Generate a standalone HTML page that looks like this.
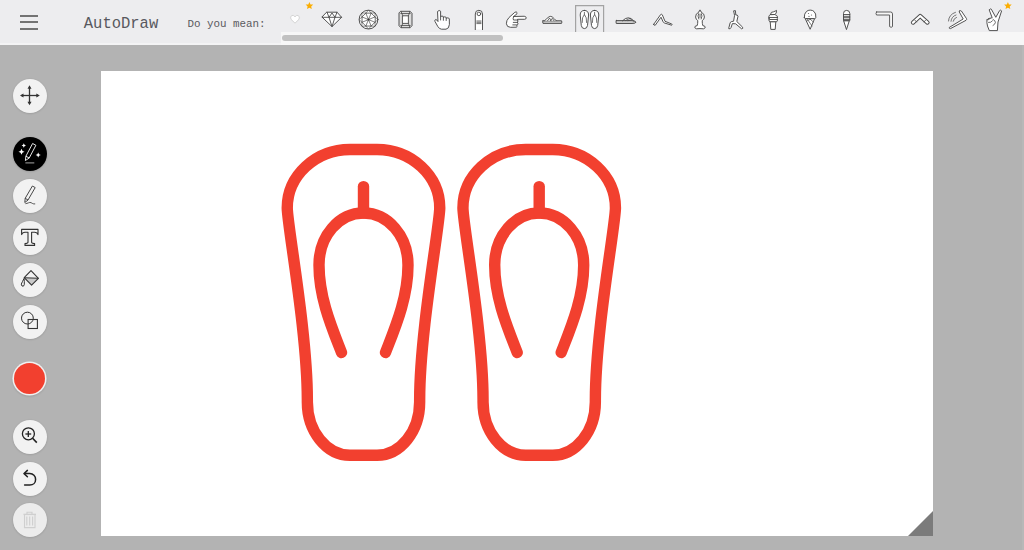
<!DOCTYPE html>
<html><head><meta charset="utf-8">
<style>
html,body{margin:0;padding:0;width:1024px;height:550px;overflow:hidden;background:#b3b3b3;font-family:"Liberation Sans",sans-serif;}
#top{position:absolute;left:0;top:0;width:1024px;height:44px;background:#ededef;}
#topline{position:absolute;left:0;top:43px;width:1024px;height:2px;background:#f4f4f5;}
#track{position:absolute;left:281px;top:32px;width:743px;height:13px;background:#f7f7f7;}
#thumb{position:absolute;left:282px;top:34.5px;width:221px;height:6.5px;border-radius:3.5px;background:#c1c1c1;}
.mono{font-family:"Liberation Mono",monospace;position:absolute;white-space:nowrap;}
#logo{left:83.8px;top:13.9px;font-size:15.5px;color:#58585e;transform:scaleY(1.1);transform-origin:0 0;}
#dym{left:187.4px;top:17.8px;font-size:10.85px;color:#5a5a5e;transform:scaleY(1.0);transform-origin:0 0;}
#canvas{position:absolute;left:101px;top:71px;width:832px;height:465px;background:#fff;}
.btn{position:absolute;left:12.85px;width:34px;height:34px;border-radius:50%;background:#f2f2f2;box-shadow:0 0.5px 2px rgba(0,0,0,0.18);}
.btn svg{position:absolute;left:0;top:0;}
svg{overflow:visible}
</style></head><body>
<div id="top"></div>
<div id="topline"></div>
<div id="track"></div>
<div id="thumb"></div>
<!-- hamburger -->
<div style="position:absolute;left:20px;top:15px;width:18px;height:2.2px;background:#737373"></div>
<div style="position:absolute;left:20px;top:21.3px;width:18px;height:2.2px;background:#737373"></div>
<div style="position:absolute;left:20px;top:27.5px;width:18px;height:2.2px;background:#737373"></div>
<svg style="position:absolute;left:0;top:0" width="1024" height="45">
 <path d="M575.6 32 V5.6 H603.6 V32" fill="none" stroke="#a3a3a3" stroke-width="1.2"/>
 <!-- heart -->
 <path d="M295 16.8 Q293.3 14.6 291.6 15.6 Q290 16.8 291 19.3 L295 23.2 L299 19.3 Q300 16.8 298.4 15.6 Q296.7 14.6 295 16.8Z" fill="#fff" stroke="#d4d4d4" stroke-width="1"/>
 <!-- stars -->
 <path id="star" d="M309.4 1.9 L310.5 4.4 L313.2 4.6 L311.2 6.4 L311.8 9.1 L309.4 7.7 L307 9.1 L307.6 6.4 L305.6 4.6 L308.3 4.4Z" fill="#fbad00"/>
 <use href="#star" transform="translate(698.5,0)"/>
 <g fill="#fff" stroke="#4a4a4a" stroke-width="0.95" stroke-linejoin="round" stroke-linecap="round">
  <!-- diamond -->
  <path d="M327 12.2 L337 12.2 L341.6 17.3 L332 26.6 L322.2 17.3 Z"/>
  <path d="M322.2 17.3 H341.6 M327 12.2 L329 17.3 L332 13 L335 17.3 L337 12.2 M329 17.3 L332 26.6 L335 17.3" fill="none" stroke-width="0.9"/>
  <!-- round diamond -->
  <circle cx="368.5" cy="19.6" r="9.4"/>
  <path d="M374.97 22.28 L371.18 26.07 L365.82 26.07 L362.03 22.28 L362.03 16.92 L365.82 13.13 L371.18 13.13 L374.97 16.92 Z" fill="none" stroke-width="0.8"/>
  <path d="M368.5 19.6 L374.97 22.28 M368.5 19.6 L371.18 26.07 M368.5 19.6 L365.82 26.07 M368.5 19.6 L362.03 22.28 M368.5 19.6 L362.03 16.92 M368.5 19.6 L365.82 13.13 M368.5 19.6 L371.18 13.13 M368.5 19.6 L374.97 16.92" fill="none" stroke-width="0.7"/>
  <path d="M374.97 22.28 L375.15 26.25 L371.18 26.07 M371.18 26.07 L368.50 29.00 L365.82 26.07 M365.82 26.07 L361.85 26.25 L362.03 22.28 M362.03 22.28 L359.10 19.60 L362.03 16.92 M362.03 16.92 L361.85 12.95 L365.82 13.13 M365.82 13.13 L368.50 10.20 L371.18 13.13 M371.18 13.13 L375.15 12.95 L374.97 16.92 M374.97 16.92 L377.90 19.60 L374.97 22.28" fill="none" stroke-width="0.6"/>
  <circle cx="368.5" cy="19.6" r="1" fill="#333" stroke="none"/>
  <!-- emerald -->
  <path d="M401 11.3 H410 L412 13.3 V25.7 L410 27.7 H401 L399 25.7 V13.3 Z" fill="#ddd"/>
  <path d="M402.8 15.8 H408.4 V23.4 H402.8 Z" stroke-width="0.9"/>
  <path d="M401 11.3 L402.8 15.8 M410 11.3 L408.4 15.8 M401 27.7 L402.8 23.4 M410 27.7 L408.4 23.4 M400.8 13.5 H410.2 M400.8 25.5 H410.2" fill="none" stroke-width="0.8"/>
  <!-- hand up -->
  <path d="M437.8 11.2 Q439.2 9.6 440.6 11.2 L440.6 16.6 Q442 15.4 443.4 16.6 L443.4 17.4 Q444.8 16.2 446.2 17.4 L446.3 18.3 Q447.9 17.2 449.3 18.6 L449.4 24.5 Q449 28.8 446 29.2 L441.5 29.2 Q439.3 29 437.8 26.5 L435 21.5 Q434.3 19.8 435.8 19.5 Q437 19.6 437.8 21.2 Z"/>
  <path d="M440.6 16.6 V20 M443.4 17.4 V20.3 M446.2 18.3 V20.5" fill="none" stroke-width="0.9"/>
  <!-- finger -->
  <path d="M475.3 29.6 V14 Q475.3 10.3 478.9 10.3 Q482.5 10.3 482.5 14 V29.6" />
  <circle cx="478.9" cy="13.9" r="1.8" stroke-width="0.9"/>
  <path d="M476.8 21 H481 M476.8 22.3 H481 M476.8 23.6 H481" fill="none" stroke-width="0.8"/>
  <!-- hand right -->
  <path d="M524.6 16.3 Q526.2 16.5 526.2 17.8 Q526.2 19.3 524.6 19.3 L517.5 19.3 L517.5 20 Q518.5 21 517.5 22 L517.5 22.8 Q518.5 23.8 517.5 24.7 L516.8 25.6 Q517.5 26.8 516.3 27.2 L510.5 27.3 Q506.8 27.3 506.4 23.8 Q506.2 20.5 509 17.5 L514.8 12.3 Q516.5 11.3 517 12.6 Q517.2 13.6 515.8 15 L513.8 16.3 Z"/>
  <path d="M513.8 16.3 Q512.5 18.5 513.5 20 H517.5 M513.3 22.4 H517.5 M512.8 24.9 H517" fill="none" stroke-width="0.9"/>
  <!-- slide -->
  <path d="M543 20.8 H561.5 Q562.3 22.1 561.5 23.4 H543 Q542.3 22.1 543 20.8Z" fill="#ccc"/>
  <path d="M544.5 20.8 Q547 18.3 549 16.8 Q550.8 15.8 552.3 17 Q554.5 18.8 556.3 20.8" />
  <path d="M547.5 20.8 L549.6 18 L551 20.8 M550.5 20.8 L552.3 18.3 L554 20.8" fill="none" stroke-width="0.8"/>
  <!-- mini flip flops -->
  <path d="M584.4 10.4 Q588.6 10.4 588.6 15 L587.5 25.5 Q587 28.6 584.4 28.6 Q581.8 28.6 581.3 25.5 L580.2 15 Q580.2 10.4 584.4 10.4Z"/>
  <path d="M594.6 10.4 Q598.8 10.4 598.8 15 L597.7 25.5 Q597.2 28.6 594.6 28.6 Q592 28.6 591.5 25.5 L590.4 15 Q590.4 10.4 594.6 10.4Z"/>
  <path d="M582.2 22.5 Q581.8 17 584.4 14.5 Q587 17 586.6 22.5 M592.4 22.5 Q592 17 594.6 14.5 Q597.2 17 596.8 22.5 M584.4 12.3 V15 M594.6 12.3 V15" fill="none" stroke="#666" stroke-width="0.9"/>
  <!-- flat sandal -->
  <path d="M616.3 20.6 L632 20.6 Q636 21 636 22.2 Q635.5 23.5 632 23.5 L616.3 23.5 Q615.6 22 616.3 20.6Z" fill="#ccc"/>
  <path d="M622.5 20.8 Q625.5 17.6 628.5 17.8 Q631.5 18.2 633.8 21" fill="none"/>
  <path d="M625.5 20.6 L630 18.3 M628 20.7 L632 19.5" fill="none" stroke-width="0.7"/>
  <!-- downward dog -->
  <path d="M653.7 24.3 L660.6 14.6 Q661.6 13.8 662.3 14.8 L665 21.3 L671.8 24 Q672.6 24.8 671.6 25.2 L664.5 23 Q663.4 22.6 663.1 21.8 L661 17.2 L655.2 25.3 Q654 25.6 653.7 24.3Z"/>
  <!-- lotus -->
  <path d="M700 10.4 Q701.2 10.5 701.2 12.2 Q704.6 13.6 704.4 17 Q704.2 19.6 702.2 20.6 Q702.2 23.6 702.8 25.6 Q705.6 25.8 705.2 27.8 Q704.4 29.4 700 28.6 Q695.6 29.4 694.8 27.8 Q694.4 25.8 697.2 25.6 Q697.8 23.6 697.8 20.6 Q695.8 19.6 695.6 17 Q695.4 13.6 698.8 12.2 Q698.8 10.5 700 10.4Z"/>
  <path d="M698.6 13.6 Q697.2 15.8 698.8 19 M701.4 13.6 Q702.8 15.8 701.2 19 M700 14.3 V17.5" fill="none" stroke-width="0.9"/>
  <!-- warrior -->
  <path d="M734 10.8 L735.4 10.6 L735.8 15 Q737.6 14.6 738 16.2 L736.8 21.5 L742.6 27.2 Q743.3 28.8 741.6 28.8 L735.6 23.8 L732.4 23.6 L731 27.6 Q730.6 29 728.9 28.8 Q728.2 28 729 27.2 L730.2 22.6 Q730.8 21.4 733.6 21.2 L734.5 15.8 Z"/>
  <!-- soft serve -->
  <path d="M770.6 21.7 H775.8 L775.2 29.4 H771.2 Z"/>
  <path d="M769 18.5 Q768.3 20 769.6 21.7 H776.8 Q778 20 777.3 18.5 Q778 17 776.8 15.6 Q775.5 14 771 14.2 Q769 15 768.8 16.8 Q768.8 17.7 769 18.5Z"/>
  <path d="M768.9 17.5 H777.4 M769.6 19.5 H776.8" fill="none" stroke-width="0.9"/>
  <path d="M770.5 14.3 Q770.8 11.5 773.5 11.8 Q775.5 11 776.5 10.4 Q776.8 13.5 775.3 14.3Z"/>
  <!-- scoop cone -->
  <path d="M805.6 18.6 L814.6 18.6 L810.3 28.9 Z"/>
  <path d="M807.5 19.5 L812 26 M810 19 L813.3 22 M806.8 21 L810.8 19" fill="none" stroke-width="0.7"/>
  <path d="M804.3 17.6 Q804 13.6 806.4 11.5 Q808 10.1 810.2 10.1 Q812.6 10.1 814 11.5 Q816.3 13.5 815.8 17.6 Q815.5 18.7 814.6 18.6 L805.6 18.6 Q804.5 18.6 804.3 17.6Z"/>
  <circle cx="808.5" cy="13.5" r="0.6" fill="#666" stroke="none"/><circle cx="811.5" cy="15" r="0.6" fill="#666" stroke="none"/><circle cx="809" cy="16.4" r="0.6" fill="#666" stroke="none"/>
  <!-- tall cone -->
  <path d="M844 20.7 L849.3 20.7 L846.6 29.2 Z"/>
  <path d="M843.5 20.3 V13.5 Q843.5 10.4 846.6 10.4 Q849.8 10.4 849.8 13.5 V20.3 Z"/>
  <path d="M843.5 14.5 H849.8 M843.5 16.3 H849.8 M843.5 17.7 H849.8 M843.5 19.4 H849.8" fill="none" stroke-width="0.9"/>
  <!-- corner -->
  <path d="M876.5 12 H890.6 Q892.5 12 892.5 13.9 V26.6 Q891.2 28 889.6 26.6 V15 H876.5 Q875.4 13.5 876.5 12Z" fill="#f7f7f7" stroke="#555"/>
  <!-- boomerang -->
  <path d="M913 22.6 L920.2 16 L927.5 22.6" fill="none" stroke="#4a4a4a" stroke-width="4.2"/>
  <path d="M913 22.6 L920.2 16 L927.5 22.6" fill="none" stroke="#fff" stroke-width="2.3"/>
  <path d="M915 20.3 L916.5 21.9 M925.5 20.3 L924 21.9" fill="none" stroke-width="0.8"/>
  <!-- flying boomerang -->
  <path d="M959.5 11 Q960.6 10.2 961.4 11 L966.5 18.6 Q967 19.7 966 20.3 L950.5 28.6 Q948.8 28.6 949.3 27.4 L963.2 19 L959.3 12 Q959.1 11.4 959.5 11Z"/>
  <path d="M948.5 21 Q948.8 14.5 955.5 12.3 M951 21.3 Q951.5 16.3 956 15 M953.2 21.3 Q953.8 18.2 956.5 17.4" fill="none" stroke="#666" stroke-width="0.9"/>
  <!-- peace hand -->
  <path d="M989.4 9.5 Q990.3 8.3 991.3 9.2 L995.8 17.3 L999.6 10.6 Q1000.8 9.5 1001.6 10.9 L998 22 L997.4 30.6 L989.3 30.6 L987.5 26 Q986.5 22.3 987 19.8 Q987.7 18.2 990.3 18.2 L991.8 17.8 Z"/>
  <path d="M987 19.8 Q989.5 20.3 990.3 18.5 M988.5 22.5 Q991 23 992.5 20.8 M993 19.3 Q995.5 20.5 995.4 22.5 Q995 24.5 993 25.5" fill="none" stroke-width="0.8"/>
 </g>
</svg>
<div class="mono" id="logo">AutoDraw</div>
<div class="mono" id="dym">Do you mean:</div>

<div id="canvas"></div>
<div style="position:absolute;left:1022px;top:45px;width:2px;height:505px;background:#b8b8b8"></div>
<svg style="position:absolute;left:0;top:0" width="1024" height="550">
  <polygon points="908,536 933,536 933,511" fill="#7b7b7b"/>
  <g id="ff" fill="none" stroke="#f2402f" stroke-width="11.4" stroke-linecap="round" stroke-linejoin="round">
    <path d="M350 149.5 C315.5 149.5 287.25 175.8 287.25 208 C287.25 225 307.35 332 307.35 400 L307.35 402 C307.35 431.3 326.5 455.25 350 455.25 L377 455.25 C400.5 455.25 419.65 431.3 419.65 402 L419.65 400 C419.65 332 439.75 225 439.75 208 C439.75 175.8 411.5 149.5 377 149.5 Z"/>
    <path d="M341.5 352.5 C332 328 319 298 319 265 C319 236 339 213 363.5 213 C388 213 408 236 408 265 C408 298 395 328 385.5 352.5"/>
    <path d="M363.5 186.6 L363.5 213"/>
  </g>
  <use href="#ff" transform="translate(175.7,0)"/>
</svg>

<div class="btn" style="top:78.7px"></div>
<div class="btn" style="top:136.7px;background:#000"></div>
<div class="btn" style="top:178.5px"></div>
<div class="btn" style="top:220.5px"></div>
<div class="btn" style="top:262.5px"></div>
<div class="btn" style="top:304.5px"></div>
<div class="btn" style="top:363.2px;left:14px;width:31.2px;height:31.2px;background:#f2402f;box-shadow:0 0 0 1.6px #f0f0f0, 0 1px 2px 1.6px rgba(0,0,0,0.12)"></div>
<div class="btn" style="top:419.7px"></div>
<div class="btn" style="top:461.7px"></div>
<div class="btn" style="top:503px;background:#ececec"></div>
<svg style="position:absolute;left:0;top:0" width="60" height="550">
 <!-- move -->
 <g stroke="#333" stroke-width="1.3" fill="#333">
  <line x1="21.5" y1="95.5" x2="38" y2="95.5"/>
  <line x1="29.5" y1="87" x2="29.5" y2="103.5"/>
  <polygon points="20,95.5 23.5,93.5 23.5,97.5" stroke="none"/>
  <polygon points="39.8,95.5 36.3,93.5 36.3,97.5" stroke="none"/>
  <polygon points="29.5,85.3 27.5,88.8 31.5,88.8" stroke="none"/>
  <polygon points="29.5,105.2 27.5,101.7 31.5,101.7" stroke="none"/>
 </g>
 <!-- autodraw pencil -->
 <g fill="none" stroke="#fff" stroke-width="0.9" stroke-linejoin="round">
  <path d="M25.4 160.5 L25.9 156.2 L32.6 143.5 L35.9 145.3 L29.2 158 Z"/>
  <path d="M25.9 156.2 L29.2 158"/>
 </g>
 <line x1="25.4" y1="162.9" x2="34.3" y2="162.9" stroke="#999" stroke-width="1.1"/>
 <g fill="#fff">
  <path d="M23.8 143.3 Q24.1 145.2 26 145.5 Q24.1 145.8 23.8 147.7 Q23.5 145.8 21.6 145.5 Q23.5 145.2 23.8 143.3Z"/>
  <path d="M21.5 148.7 Q21.9 151.3 24.5 151.7 Q21.9 152.1 21.5 154.7 Q21.1 152.1 18.5 151.7 Q21.1 151.3 21.5 148.7Z"/>
  <path d="M38.2 152.4 Q38.5 154.7 40.8 155 Q38.5 155.3 38.2 157.6 Q37.9 155.3 35.6 155 Q37.9 154.7 38.2 152.4Z"/>
 </g>
 <!-- pen -->
 <g fill="none" stroke="#333" stroke-width="0.9" stroke-linejoin="round">
  <path d="M24.8 202.5 L25.2 198.3 L32.4 186 L35.2 187.6 L28 200 Z"/>
  <path d="M25.2 198.3 L28 200"/>
  <path d="M25.4 203.7 C27.5 203.5 29.5 202 31 202.6 C32.2 203.2 33 204.2 35.2 203.9" stroke="#555" stroke-width="1"/>
 </g>
 <!-- T -->
 <path d="M21.6 229.4 H38 V234.6 Q37.2 232.2 34.6 232.2 H31.6 V242.3 Q31.6 243.4 34.6 243.6 V245.4 H25 V243.6 Q28 243.4 28 242.3 V232.2 H25 Q22.4 232.2 21.6 234.6 Z" fill="#f4f4f4" stroke="#333" stroke-width="1.1" stroke-linejoin="round"/>
 <!-- fill -->
 <path d="M24.3 277.7 L38.4 278.3 L31.6 285 Z" fill="#c9c9c9"/>
 <path d="M31 270.6 L38.4 278.3 L31.6 285.2 L24.2 277.7 Z" fill="none" stroke="#333" stroke-width="1.1" stroke-linejoin="round"/>
 <line x1="24.2" y1="277.7" x2="38.4" y2="278.3" stroke="#333" stroke-width="1.1"/>
 <path d="M24 278.5 L22.5 281.5 Q20.3 284.5 22 286 Q23.8 287 24.3 284.5 Q24.5 282 24 278.5Z" fill="none" stroke="#333" stroke-width="1"/>
 <!-- shapes -->
 <circle cx="27.4" cy="318.1" r="5.9" fill="none" stroke="#333" stroke-width="1"/>
 <rect x="28.1" y="319.5" width="9.3" height="9" fill="none" stroke="#333" stroke-width="1.1"/>
 <!-- zoom -->
 <g fill="none" stroke="#222" stroke-width="1.3">
  <circle cx="28.4" cy="433.8" r="6"/>
  <line x1="32.6" y1="438.2" x2="36.8" y2="442.6" stroke-width="1.6"/>
  <line x1="25.4" y1="434" x2="31.2" y2="434"/>
  <line x1="28.3" y1="431.1" x2="28.3" y2="436.9"/>
 </g>
 <!-- undo -->
 <g fill="none" stroke="#222" stroke-width="1.5" stroke-linecap="round" stroke-linejoin="round">
  <path d="M24.3 473.6 H29.8 C33.2 473.6 35.6 476.3 35.6 479.4 C35.6 482.6 33.2 485 29.8 485 H24.6"/>
  <path d="M27.4 470.4 L24.1 473.6 L27.4 476.8"/>
 </g>
 <!-- trash -->
 <g fill="none" stroke="#cfcfcf" stroke-width="1.1">
  <path d="M24.5 514.8 V527.6 H35 V514.8"/>
  <line x1="23.5" y1="514.4" x2="36" y2="514.4" stroke-width="1.4"/>
  <path d="M27 514 V512.2 H32 V514"/>
  <line x1="26.8" y1="516.5" x2="26.8" y2="525.5"/>
  <line x1="29.7" y1="516.5" x2="29.7" y2="525.5"/>
  <line x1="32.6" y1="516.5" x2="32.6" y2="525.5"/>
 </g>
</svg>
</body></html>
